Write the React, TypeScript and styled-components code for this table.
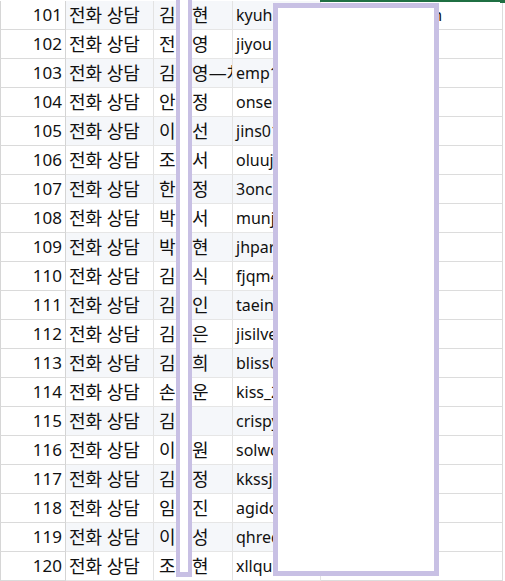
import React from "react";
import styled, { createGlobalStyle } from "styled-components";

const GlobalStyle = createGlobalStyle`
  html, body {
    margin: 0;
    padding: 0;
    background: #ffffff;
  }
  body {
    font-family: "Noto Sans", "Noto Sans CJK KR", sans-serif;
    color: #111111;
  }
`;

const Sheet = styled.div`
  position: relative;
  width: 505px;
  height: 581px;
  overflow: hidden;
  padding-top: 1px;
  box-sizing: border-box;
  background: #ffffff;
`;

const Row = styled.div`
  display: grid;
  grid-template-columns: 66px 88px 79px 88px 182px 2px;
  height: 29px;
  box-sizing: border-box;
`;

const Cell = styled.div<{ $striped?: boolean }>`
  box-sizing: border-box;
  height: 29px;
  border-right: 1px solid #e3e3e3;
  border-bottom: 1px solid #e6e6e6;
  background: ${(p) => (p.$striped ? "#f5f7fa" : "#ffffff")};
  font-size: 16px;
  line-height: 28px;
  white-space: nowrap;
`;

const NumCell = styled(Cell)`
  border-left: 1px solid #d6d6d6;
  border-right-color: #d4d4d4;
  border-bottom-color: #dadada;
  text-align: right;
  padding-right: 3px;
  font-size: 17px;
  background: #ffffff;
`;

const TypeCell = styled(Cell)`
  padding-left: 3px;
  font-size: 18px;
  overflow: hidden;
`;

const NameCell = styled(Cell)`
  padding-left: 5px;
  font-size: 18px;
  overflow: hidden;
`;

const EmailCell = styled(Cell)`
  padding-left: 3px;
  overflow: visible;
`;

const EmptyCell = styled(Cell)`
  background: transparent;
  border-right-color: #dcdcdc;
  border-bottom-color: #dcdcdc;
`;

const Edge = styled.div`
  height: 29px;
`;

const SelectionLine = styled.div`
  position: absolute;
  left: 320px;
  top: 0;
  width: 183px;
  height: 2px;
  background: #1f6f43;
`;

const FillHandle = styled.div`
  position: absolute;
  left: 500px;
  top: 0;
  width: 5px;
  height: 3px;
  background: #1f6f43;
`;

const MaskBar = styled.div`
  position: absolute;
  left: 176px;
  top: -10px;
  width: 16px;
  height: 587px;
  box-sizing: border-box;
  border: 4px solid #c8c0e4;
  border-bottom-width: 5px;
  background: #ffffff;
`;

const MaskBox = styled.div`
  position: absolute;
  left: 273px;
  top: 3px;
  width: 166px;
  height: 573px;
  box-sizing: border-box;
  border: 5px solid #c8c0e4;
  background: #ffffff;
`;

const rows: [number, string, string][] = [
  [101, "김민현", "kyuhew0725@hanmail.com"],
  [102, "전지영", "jiyoung88@naver.com"],
  [103, "김나영—차장님", "emp1024@gmail.com"],
  [104, "안수정", "onsen77@naver.com"],
  [105, "이미선", "jins0105@daum.net"],
  [106, "조은서", "oluuji@naver.com"],
  [107, "한지정", "3oncloud@naver.com"],
  [108, "박민서", "munji12@gmail.com"],
  [109, "박지현", "jhpark33@naver.com"],
  [110, "김동식", "fjqm42@naver.com"],
  [111, "김태인", "taein91@gmail.com"],
  [112, "김지은", "jisilver@naver.com"],
  [113, "김은희", "bliss0815@daum.net"],
  [114, "손지운", "kiss_22@naver.com"],
  [115, "김준", "crispy7@naver.com"],
  [116, "이소원", "solwon@naver.com"],
  [117, "김수정", "kkssj0@gmail.com"],
  [118, "임효진", "agido11@naver.com"],
  [119, "이지성", "qhred@naver.com"],
  [120, "조승현", "xllqu9@gmail.com"],
];

export default function App() {
  return (
    <>
      <GlobalStyle />
      <Sheet>
        {rows.map(([num, name, email], i) => {
          const striped = i % 2 === 0;
          return (
            <Row key={num}>
              <NumCell>{num}</NumCell>
              <TypeCell $striped={striped}>전화 상담</TypeCell>
              <NameCell $striped={striped}>{name}</NameCell>
              <EmailCell $striped={striped}>{email}</EmailCell>
              <EmptyCell />
              <Edge />
            </Row>
          );
        })}
        <SelectionLine />
        <FillHandle />
        <MaskBar />
        <MaskBox />
      </Sheet>
    </>
  );
}
